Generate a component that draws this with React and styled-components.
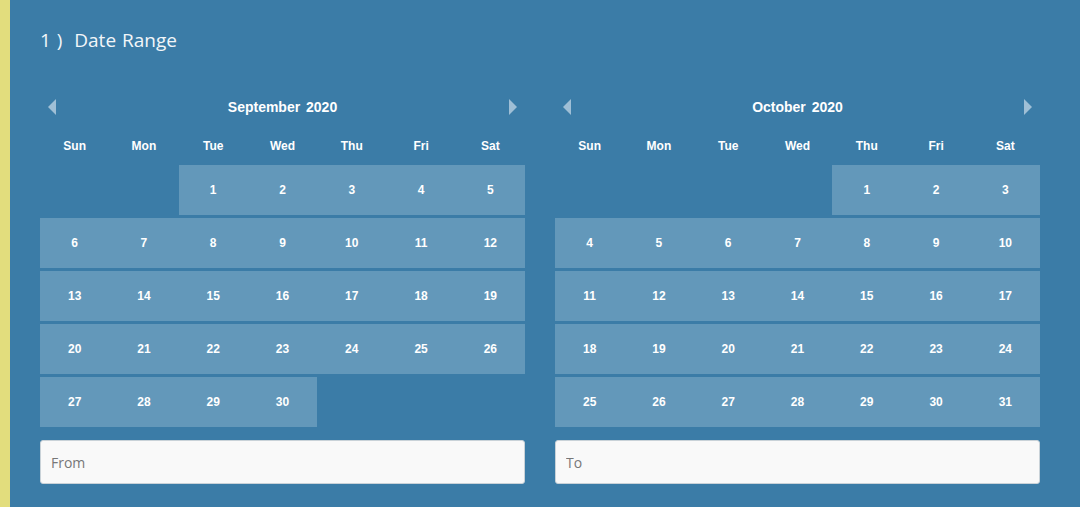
import React from 'react';
import styled, { createGlobalStyle } from 'styled-components';

const GlobalStyle = createGlobalStyle`
  html, body {
    margin: 0;
    padding: 0;
    background: #3b7ca7;
  }
  * { box-sizing: border-box; }
`;

const Page = styled.div`
  display: flex;
  min-height: 507px;
  background: #3b7ca7;
`;

const Strip = styled.div`
  width: 10px;
  flex-shrink: 0;
  background: #e2dd7d;
`;

const Content = styled.div`
  flex: 1;
  padding: 27px 40px 0 30px;
`;

const Title = styled.h2`
  margin: 0;
  font-family: "Open Sans", sans-serif;
  font-weight: 400;
  font-size: 19px;
  line-height: 26px;
  color: #f2f6f9;
  word-spacing: 1px;
`;

const Calendars = styled.div`
  display: grid;
  grid-template-columns: 1fr 1fr;
  column-gap: 30px;
  margin-top: 44px;
`;

const Calendar = styled.div`
  display: flex;
  flex-direction: column;
`;

const Header = styled.div`
  display: flex;
  align-items: center;
  justify-content: space-between;
  height: 20px;
  padding: 0 8px;
`;

const MonthName = styled.div`
  font-family: "Liberation Sans", Arial, sans-serif;
  font-weight: 700;
  font-size: 14px;
  color: #ffffff;
  word-spacing: 2px;
`;

const Arrow = styled.button`
  width: 8px;
  height: 16px;
  padding: 0;
  border: 0;
  background: none;
  cursor: pointer;
  display: flex;
  svg { display: block; }
`;

const Week = styled.div`
  display: grid;
  grid-template-columns: repeat(7, 1fr);
`;

const DayNames = styled(Week)`
  height: 38px;
  align-items: center;
  margin-top: 10px;
`;

const DayName = styled.div`
  text-align: center;
  font-family: "Liberation Sans", Arial, sans-serif;
  font-weight: 700;
  font-size: 12px;
  color: #ffffff;
`;

const Days = styled.div`
  display: grid;
  grid-template-columns: repeat(7, 1fr);
  grid-auto-rows: 50px;
  row-gap: 3px;
`;

const Day = styled.div`
  display: flex;
  align-items: center;
  justify-content: center;
  background: ${(p) => (p.$empty ? 'transparent' : '#6398ba')};
  font-family: "Liberation Sans", Arial, sans-serif;
  font-weight: 700;
  font-size: 12px;
  color: #ffffff;
  cursor: ${(p) => (p.$empty ? 'default' : 'pointer')};
`;

const Input = styled.input`
  margin-top: 13px;
  height: 44px;
  width: 100%;
  padding: 0 10px;
  border: 1px solid #c9d2d8;
  border-radius: 3px;
  background: #f9f9f9;
  font-family: "Open Sans", sans-serif;
  font-size: 14px;
  color: #333;
  outline: none;
  &::placeholder { color: #777; }
`;

const WEEKDAYS = ['Sun', 'Mon', 'Tue', 'Wed', 'Thu', 'Fri', 'Sat'];

function Triangle({ dir }) {
  const d = dir === 'left' ? 'M8 0 L0 8 L8 16 Z' : 'M0 0 L8 8 L0 16 Z';
  return (
    <svg width="8" height="16" viewBox="0 0 8 16">
      <path d={d} fill="#9fbfd6" />
    </svg>
  );
}

function Month({ title, startDay, days, placeholder }) {
  const cells = [];
  for (let i = 0; i < startDay; i++) cells.push(null);
  for (let d = 1; d <= days; d++) cells.push(d);

  return (
    <Calendar>
      <Header>
        <Arrow aria-label="previous month"><Triangle dir="left" /></Arrow>
        <MonthName>{title}</MonthName>
        <Arrow aria-label="next month"><Triangle dir="right" /></Arrow>
      </Header>
      <DayNames>
        {WEEKDAYS.map((w) => (
          <DayName key={w}>{w}</DayName>
        ))}
      </DayNames>
      <Days>
        {cells.map((d, i) => (
          <Day key={i} $empty={d === null}>{d}</Day>
        ))}
      </Days>
      <Input placeholder={placeholder} />
    </Calendar>
  );
}

export default function App() {
  return (
    <>
      <GlobalStyle />
      <Page>
        <Strip />
        <Content>
          <Title>1 )&nbsp; Date Range</Title>
          <Calendars>
            <Month title="September 2020" startDay={2} days={30} placeholder="From" />
            <Month title="October 2020" startDay={4} days={31} placeholder="To" />
          </Calendars>
        </Content>
      </Page>
    </>
  );
}
